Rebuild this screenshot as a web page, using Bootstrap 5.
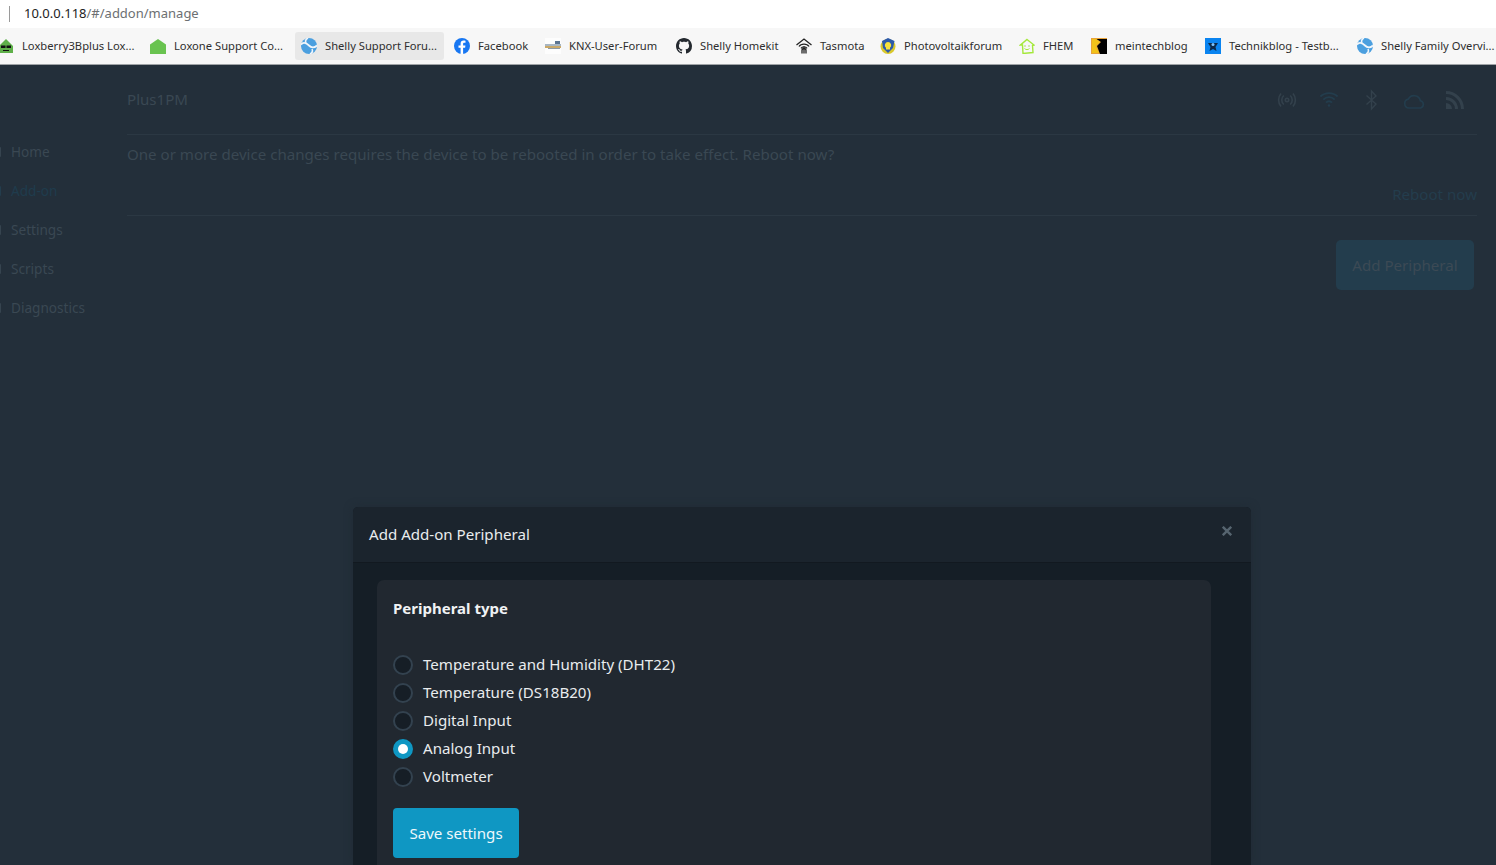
<!DOCTYPE html>
<html lang="en">
<head>
<meta charset="utf-8">
<title>Plus1PM</title>
<link href="https://cdn.jsdelivr.net/npm/bootstrap@5.3.0/dist/css/bootstrap.min.css" rel="stylesheet">
<style>
html,body{height:865px;overflow:hidden}
body{background:#232f3a;font-family:"Noto Sans",sans-serif;font-size:15.1px;color:#3a4853}
.urlbar{height:28px;background:#fff;padding-left:9px;font-size:13px;color:#6c6f72}
.urlsep{width:1px;height:16px;background:#9a9a9a;margin-right:14px}
.urlhost{color:#222}
.bmarks{height:37px;background:#f7f7f7;border-bottom:1px solid #9fa3a6;padding:4px 0 0 0;font-size:11.2px;color:#2e2e2e;white-space:nowrap;overflow:hidden;margin-left:-8px}
.bm{height:28px;padding:0 6px;gap:8px;border-radius:3px;flex:none}
.bm svg{flex:none}
.bm span{display:block}
.bm:nth-child(1) span{width:112px}
.bm:nth-child(2) span{width:111px}
.bm:nth-child(3) span{width:113px}
.bm:nth-child(4) span{width:51px}
.bm:nth-child(5) span{width:91px}
.bm:nth-child(6) span{width:80px}
.bm:nth-child(7) span{width:44px}
.bm:nth-child(8) span{width:99px}
.bm:nth-child(9) span{width:32px}
.bm:nth-child(10) span{width:74px}
.bm:nth-child(11) span{width:112px}
.bm:nth-child(12) span{width:114px}
.bm-on{background:#e8e8e8}
.shell{height:800px}
.sidenav{width:127px;flex:none;padding-top:67.5px}
.sideitem{height:39px;padding-left:11px;font-size:13.6px;color:#3a4853;position:relative}
.sideitem::before{content:"";position:absolute;left:-3px;top:14px;width:4px;height:10px;background:#36444f;border-radius:1px}
.sideitem.cur{color:#1f3c4d}
.sideitem.cur::before{background:#233d4d}
.mainarea{width:1350px;flex:none}
.toprow{height:70px;border-bottom:1px solid #2b3843;font-size:15.1px}
.statusicons{gap:24px;padding-right:13px;color:#33414c}
.statusicons svg{overflow:visible;display:block}
.notice{height:81px;border-bottom:1px solid #2b3843}
.notice-text{padding-top:7px;line-height:24px}
.notice-link{color:#233d4d;line-height:24px;margin-top:16px}
.addbtn{margin:24px 3px 0 0;width:138px;height:50px;background:#233d4d;border:0;border-radius:5px;color:#3c4a55;font-size:15.1px;padding:0}
.addbtn:disabled{background:#233d4d;color:#3c4a55;opacity:1}
.dlg{left:353px;top:507px;width:898px;height:358px;background:#151e26;border:0;border-radius:5px 5px 0 0;box-shadow:0 0 8px #202b35;overflow:hidden}
.dlg-head{height:56px;flex:none;padding:0 16px;background:#1b242d;border-bottom:1px solid #121920;color:#e9ecee}
.dlg-title{font-size:15.1px;font-weight:400;margin:0}
.dlg-x{position:absolute;left:869px;top:19px;background:none;border:0;padding:0;line-height:0}
.dlg-body{padding:17px 40px 0 24px}
.typecard{background:#212830;border:0;border-radius:7px;padding:16px;height:300px;color:#e9ecee}
.typehead{font-weight:700;font-size:15px;line-height:24px;margin-bottom:30px;color:#f0f2f4}
.typeopt{height:28px;margin:0;padding:0;gap:10px;display:flex;align-items:center;font-size:15.1px;min-height:0}
.typeopt .form-check-input{width:20px;height:20px;margin:1px 0 0;float:none;background-color:#161e26;border:2px solid #33424f;flex:none}
.typeopt .form-check-input:checked{background-color:#0f97c3;border-color:#0f97c3;background-size:20px}
.savebtn{margin-top:18px;width:126px;height:50px;background:#0f97c3;border:0;border-radius:4px;font-size:15.1px;color:#eef8fb;padding:0}
</style>
</head>
<body>
<div class="urlbar d-flex align-items-center"><span class="urlsep"></span><span><span class="urlhost">10.0.0.118</span>/#/addon/manage</span></div>
<div class="bmarks d-flex gap-1">
<a class="bm d-flex align-items-center text-decoration-none text-reset"><svg width="16" height="16" viewBox="0 0 16 16"><path d="M8 1 15 8v7H1V8z" fill="#5fb04a"/><rect x="3" y="7.5" width="4.5" height="2.5" fill="#111"/><rect x="8.5" y="7.5" width="4.5" height="2.5" fill="#111"/><path d="M5 12h6v1H5z" fill="#111"/></svg><span>Loxberry3Bplus Lox...</span></a>
<a class="bm d-flex align-items-center text-decoration-none text-reset"><svg width="16" height="16" viewBox="0 0 16 16"><path d="M8 1 16 6.500V16H0V6.500z" fill="#69c350"/></svg><span>Loxone Support Co...</span></a>
<a class="bm bm-on d-flex align-items-center text-decoration-none text-reset"><svg width="16" height="16" viewBox="0 0 16 16"><circle cx="8" cy="8" r="8" fill="#4b9fdf"/><path d="M0 6.500C3 3.500 6 5.500 8 7.500s5 3 8 0" fill="none" stroke="#f1f6fb" stroke-width="1.800"/><path d="M7 0c-2 1-3 3-2 5M9 16c2-1 3-3 2-5" fill="none" stroke="#f1f6fb" stroke-width="1.500"/></svg><span>Shelly Support Foru...</span></a>
<a class="bm d-flex align-items-center text-decoration-none text-reset"><svg width="16" height="16" viewBox="0 0 16 16"><circle cx="8" cy="8" r="8" fill="#1877f2"/><path d="M9.100 16V9.800h2l.35-2.400H9.100V6c0-.7.3-1.200 1.300-1.200h1.100V2.700c-.5-.1-1.200-.2-1.900-.2-1.900 0-3 1.100-3 3.200v1.700H4.500v2.400h2.100V16z" fill="#fff"/></svg><span>Facebook</span></a>
<a class="bm d-flex align-items-center text-decoration-none text-reset"><svg width="16" height="16" viewBox="0 0 16 16"><rect width="16" height="16" fill="#fdfdfd"/><rect x="10" y="3" width="5" height="3" fill="#5a7390"/><rect y="6" width="16" height="2" fill="#a7b6c4"/><rect y="8" width="16" height="2" fill="#c9a868"/><rect x="3" y="10" width="12" height="1" fill="#8b98a5"/></svg><span>KNX-User-Forum</span></a>
<a class="bm d-flex align-items-center text-decoration-none text-reset"><svg width="16" height="16" viewBox="0 0 16 16"><path fill="#24292f" d="M8 0C3.580 0 0 3.580 0 8c0 3.540 2.290 6.530 5.470 7.590.4.070.55-.17.55-.38 0-.19-.01-.82-.01-1.490-2.010.37-2.530-.49-2.690-.94-.09-.23-.48-.94-.82-1.130-.28-.15-.68-.52-.01-.53.630-.01 1.080.58 1.230.82.720 1.210 1.870.870 2.330.660.070-.520.280-.870.510-1.070-1.780-.2-3.640-.890-3.640-3.950 0-.870.310-1.590.820-2.150-.08-.2-.36-1.020.08-2.120 0 0 .67-.210 2.200.820.640-.180 1.320-.270 2-.270s1.360.090 2 .270c1.530-1.040 2.200-.820 2.200-.820.440 1.100.160 1.920.080 2.120.510.560.820 1.270.820 2.150 0 3.070-1.870 3.750-3.650 3.950.290.250.540.730.540 1.480 0 1.070-.010 1.930-.010 2.200 0 .210.150.460.550.380A8.010 8.010 0 0 0 16 8c0-4.420-3.580-8-8-8z"/></svg><span>Shelly Homekit</span></a>
<a class="bm d-flex align-items-center text-decoration-none text-reset"><svg width="16" height="16" viewBox="0 0 16 16" fill="none" stroke="#222" stroke-width="1.300"><path d="M.5 7 8 1 15.500 7"/><path d="M3 8.500C5 5.300 11 5.300 13 8.500M5 10.300c1.200-1.900 4.800-1.900 6 0"/><path d="M8 8.500V15.500M6 15.500V12.500a2 2 0 0 1 4 0V15.500"/></svg><span>Tasmota</span></a>
<a class="bm d-flex align-items-center text-decoration-none text-reset"><svg width="16" height="16" viewBox="0 0 16 16"><circle cx="8" cy="8.500" r="7.500" fill="#d9c82c"/><path d="M8 0 14.500 3 13 10l-5 5-5-5L2 3z" fill="#2d5aa8"/><path d="M8 4a3.200 3.200 0 0 1 2 5.700V11.500H6V9.700A3.200 3.200 0 0 1 8 4z" fill="#f7e23c"/></svg><span>Photovoltaikforum</span></a>
<a class="bm d-flex align-items-center text-decoration-none text-reset"><svg width="16" height="16" viewBox="0 0 16 16" fill="none" stroke="#a4e83a" stroke-width="1.400"><path d="M8 1.500 15 7l-1.500.5.500 7-10 1-.5-8.500L1.500 7z"/><circle cx="6" cy="8" r=".7" fill="#8fd92b" stroke="none"/><circle cx="10" cy="8" r=".7" fill="#8fd92b" stroke="none"/><path d="M5.500 10.500c1.500 1.500 3.500 1.500 5 0" stroke-width="1"/></svg><span>FHEM</span></a>
<a class="bm d-flex align-items-center text-decoration-none text-reset"><svg width="16" height="16" viewBox="0 0 16 16"><rect width="16" height="16" fill="#000"/><path d="M0 0h16v1H5.500L10 4 6 8l3 8H0z" fill="#e8a33a"/><path d="M1 1h4l4 3-4 4 3 7H1z" fill="#f2c31a"/></svg><span>meintechblog</span></a>
<a class="bm d-flex align-items-center text-decoration-none text-reset"><svg width="16" height="16" viewBox="0 0 16 16"><rect width="16" height="16" fill="#0a84f0"/><path d="M3 5h10L10.500 9 11.500 13 8 11 4.500 13 5.500 9z" fill="#0c2a4a"/><circle cx="8" cy="6.500" r="1.500" fill="#7cc4ff"/></svg><span>Technikblog - Testb...</span></a>
<a class="bm d-flex align-items-center text-decoration-none text-reset"><svg width="16" height="16" viewBox="0 0 16 16"><circle cx="8" cy="8" r="8" fill="#4b9fdf"/><path d="M0 6.500C3 3.500 6 5.500 8 7.500s5 3 8 0" fill="none" stroke="#f1f6fb" stroke-width="1.800"/><path d="M7 0c-2 1-3 3-2 5M9 16c2-1 3-3 2-5" fill="none" stroke="#f1f6fb" stroke-width="1.500"/></svg><span>Shelly Family Overvi...</span></a>
</div>
<div class="shell d-flex">
<nav class="sidenav">
<div class="sideitem d-flex align-items-center">Home</div>
<div class="sideitem cur d-flex align-items-center">Add-on</div>
<div class="sideitem d-flex align-items-center">Settings</div>
<div class="sideitem d-flex align-items-center">Scripts</div>
<div class="sideitem d-flex align-items-center">Diagnostics</div>
</nav>
<main class="mainarea">
<div class="toprow d-flex align-items-center justify-content-between">
<span>Plus1PM</span>
<div class="statusicons d-flex align-items-center">
<svg width="18" height="18" viewBox="0 0 18 18" fill="none" stroke="currentColor" stroke-width="1.600"><circle cx="9" cy="9" r="1.700"/><path d="M5.800 4.500a6 6 0 0 0 0 9M12.200 4.500a6 6 0 0 1 0 9M3 2.500a10 10 0 0 0 0 13M15 2.500a10 10 0 0 1 0 13"/></svg>
<svg width="18" height="18" viewBox="0 0 18 18" fill="none" stroke="#233d4d" stroke-width="1.800"><path d="M.4 5.500a12.500 12.500 0 0 1 17.200 0M3.300 8.600a8 8 0 0 1 11.400 0M6 11.600a4 4 0 0 1 6 0"/><circle cx="9" cy="14.500" r="1.200" fill="#233d4d" stroke="none"/></svg>
<svg width="18" height="20" viewBox="0 0 18 20" fill="none" stroke="currentColor" stroke-width="1.400"><path d="M4.500 5.500 14 14l-4.500 5V1L14 6 4.500 14.500"/></svg>
<svg width="18" height="18" viewBox="0 0 18 18" fill="none" stroke="#233d4d" stroke-width="1.600"><path d="M5 17a4.500 4.500 0 0 1-.7-8.900 6.500 6.500 0 0 1 12.100 1.700 3.700 3.700 0 0 1 .2 7.200z"/></svg>
<svg width="18" height="18" viewBox="0 0 18 18" fill="currentColor"><path d="M0 0a18 18 0 0 1 18 18h-3A15 15 0 0 0 0 3zM0 6a12 12 0 0 1 12 12H9a9 9 0 0 0-9-9z"/><path d="M0 12a6 6 0 0 1 6 6H0z"/></svg>
</div>
</div>
<div class="notice">
<div class="notice-text">One or more device changes requires the device to be rebooted in order to take effect. Reboot now?</div>
<div class="notice-link text-end">Reboot now</div>
</div>
<div class="d-flex justify-content-end"><button class="btn addbtn" type="button">Add Peripheral</button></div>
</main>
</div>
<div class="modal-content dlg position-absolute">
<div class="dlg-head d-flex align-items-center"><h5 class="dlg-title">Add Add-on Peripheral</h5>
<button class="dlg-x" type="button" aria-label="Close"><svg width="10" height="10" viewBox="0 0 10 10" stroke="#56646f" stroke-width="2.400"><path d="M.8.800l8.400 8.400M9.200.800.800 9.200"/></svg></button></div>
<div class="dlg-body">
<div class="card typecard">
<div class="typehead">Peripheral type</div>
<label class="typeopt form-check"><input class="form-check-input" type="radio" name="ptype">Temperature and Humidity (DHT22)</label>
<label class="typeopt form-check"><input class="form-check-input" type="radio" name="ptype">Temperature (DS18B20)</label>
<label class="typeopt form-check"><input class="form-check-input" type="radio" name="ptype">Digital Input</label>
<label class="typeopt form-check"><input class="form-check-input" type="radio" name="ptype" checked>Analog Input</label>
<label class="typeopt form-check"><input class="form-check-input" type="radio" name="ptype">Voltmeter</label>
<div><button class="btn btn-primary savebtn" type="button">Save settings</button></div>
</div>
</div>
</div>
<script src="https://cdn.jsdelivr.net/npm/bootstrap@5.3.0/dist/js/bootstrap.bundle.min.js"></script>
</body>
</html>
